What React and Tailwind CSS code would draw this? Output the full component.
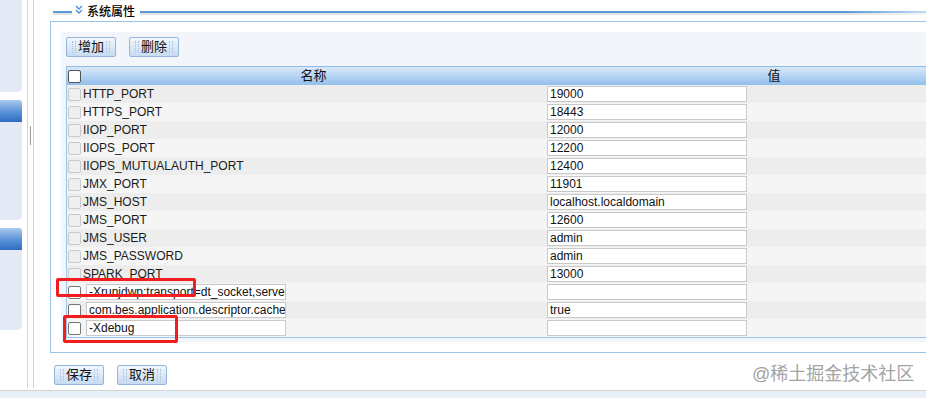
import React from 'react';

const rows = [
  { name: 'HTTP_PORT', value: '19000' },
  { name: 'HTTPS_PORT', value: '18443' },
  { name: 'IIOP_PORT', value: '12000' },
  { name: 'IIOPS_PORT', value: '12200' },
  { name: 'IIOPS_MUTUALAUTH_PORT', value: '12400' },
  { name: 'JMX_PORT', value: '11901' },
  { name: 'JMS_HOST', value: 'localhost.localdomain' },
  { name: 'JMS_PORT', value: '12600' },
  { name: 'JMS_USER', value: 'admin' },
  { name: 'JMS_PASSWORD', value: 'admin' },
  { name: 'SPARK_PORT', value: '13000' },
  { name: '-Xrunjdwp:transport=dt_socket,server=y,suspend=n,address=5005', value: '', custom: true },
  { name: 'com.bes.application.descriptor.cache.enabled', value: 'true', custom: true },
  { name: '-Xdebug', value: '', custom: true },
];

const Grip = () => (
  <span className="w-[4px] h-[12px] border-l border-r border-dotted border-[#a6bfdd]" />
);

const Btn = ({ children }) => (
  <button className="w-[50px] h-[20px] rounded-[2px] border border-[#94b6de] bg-gradient-to-b from-[#f1f6fc] to-[#c7dbf2] flex items-center justify-between px-[5px] text-[13px] leading-[18px] text-[#111]">
    <Grip />
    <span>{children}</span>
    <Grip />
  </button>
);

const Check = ({ enabled, header }) => (
  <span
    className={`block w-[13px] h-[13px] rounded-[2px] border ${
      header
        ? 'bg-white border-[#555]'
        : enabled
        ? 'bg-white border-[#777]'
        : 'bg-[#efefef] border-[#cacaca]'
    }`}
  />
);

const Field = ({ value }) => (
  <div className="w-[200px] h-[16px] border border-[#c9c9c9] bg-white text-[12px] leading-[14px] pl-[2px] text-[#111] overflow-hidden whitespace-nowrap">
    {value}
  </div>
);

const SidePanel = ({ h }) => (
  <div className={`${h} bg-[#e4eaf5] rounded-br-[5px]`} />
);

const SideHead = () => (
  <div className="h-[22px] rounded-tr-[3px] bg-gradient-to-b from-[#abc9ee] via-[#5f96da] to-[#2e6bc1]" />
);

export default function App() {
  return (
    <div className="relative w-[926px] h-[398px] overflow-hidden bg-white font-['Liberation_Sans','Noto_Sans_CJK_SC',sans-serif]">
      <div className="flex h-[390px]">
        {/* left nav */}
        <div className="w-[22px] shrink-0 flex flex-col">
          <SidePanel h="h-[92px]" />
          <div className="h-[8px]" />
          <SideHead />
          <SidePanel h="h-[98px]" />
          <div className="h-[8px]" />
          <SideHead />
          <SidePanel h="h-[80px]" />
        </div>

        {/* splitter */}
        <div className="w-[5px] shrink-0" />
        <div className="w-px shrink-0 bg-[#d4d4d4] h-[388px]" />
        <div className="w-[5px] shrink-0 flex justify-center pt-[126px]">
          <div className="w-px h-[19px] bg-[#9a9a9a]" />
        </div>
        <div className="w-px shrink-0 bg-[#d4d4d4] h-[388px]" />

        {/* content */}
        <div className="flex-1 min-w-0 overflow-hidden pl-[16px] flex flex-col">
          <div className="flex h-[21px] items-start">
            <div className="ml-[3px] mt-[11px] w-[19px]">
              <div className="h-[2px] bg-[#5b9bdc]" />
              <div className="h-[2px] bg-[#e2e2e2]" />
            </div>
            <svg className="ml-[3px] mt-[5px]" width="8" height="10" viewBox="0 0 8 10" fill="none" stroke="#4a8fdb" strokeWidth="1.4">
              <path d="M1 1 L4 4 L7 1" />
              <path d="M1 5 L4 8 L7 5" />
            </svg>
            <span className="ml-[4px] mt-[4px] text-[12px] leading-[16px] font-medium text-black">系统属性</span>
            <div className="ml-[5px] mt-[11px] flex-1">
              <div className="h-[2px] bg-[linear-gradient(to_right,#5b9bdc_90%,#c4dbf1)]" />
              <div className="h-[2px] bg-[linear-gradient(to_right,#e2e2e2_90%,#f6f6f6)]" />
            </div>
          </div>

          <div className="w-[1000px] shrink-0 border-t border-l border-b border-[#9dc3e8] pt-[10px] pb-[10px] pl-[10px]">
            <div className="bg-[#f2f6fa] pt-[5px] pl-[5px] pb-[4px]">
              <div className="flex gap-[13px]">
                <Btn>增加</Btn>
                <Btn>删除</Btn>
              </div>

              <div className="mt-[9px] w-[937px] border-l border-b border-[#9dc3e8]">
                <div className="flex items-center h-[19px] border-t border-[#8fbce9] bg-gradient-to-b from-[#d9e8f8] to-[#92bfec] text-[13px] text-[#111]">
                  <div className="w-[15px] flex justify-center">
                    <Check header />
                  </div>
                  <div className="w-[463px] text-center">名称</div>
                  <div className="w-[458px] text-center">值</div>
                </div>

                {rows.map((r, i) => (
                  <div
                    key={r.name}
                    className={`flex items-center h-[18px] ${i % 2 === 0 ? 'bg-[#ededed]' : 'bg-[#f5f5f5]'}`}
                  >
                    <div className="w-[15px] flex justify-center">
                      <Check enabled={r.custom} />
                    </div>
                    <div className="w-[463px] pl-px text-[12px] text-[#1a1a1a] whitespace-nowrap">
                      {r.custom ? (
                        <div className="ml-[3px]">
                          <Field value={r.name} />
                        </div>
                      ) : (
                        r.name
                      )}
                    </div>
                    <div className="w-[458px] pl-[2px]">
                      <Field value={r.value} />
                    </div>
                  </div>
                ))}
              </div>
            </div>
          </div>

          <div className="mt-[12px] ml-[4px] flex gap-[13px]">
            <Btn>保存</Btn>
            <Btn>取消</Btn>
          </div>
        </div>
      </div>

      <div className="h-[8px] border-t border-[#d3d3d3] bg-[#e9eff7]" />

      {/* annotation boxes */}
      <div className="absolute left-[56px] top-[278px] w-[140px] h-[19px] border-[3px] border-[#f41d1d] rounded-[2px]" />
      <div className="absolute left-[63px] top-[315px] w-[115px] h-[28px] border-[3px] border-[#f41d1d] rounded-[2px]" />

      {/* watermark */}
      <div className="absolute left-[752px] top-[362px] whitespace-nowrap text-[18px] leading-[24px] text-[#a3a3a3] [text-shadow:0_0_2px_#fff]">
        @稀土掘金技术社区
      </div>
    </div>
  );
}
